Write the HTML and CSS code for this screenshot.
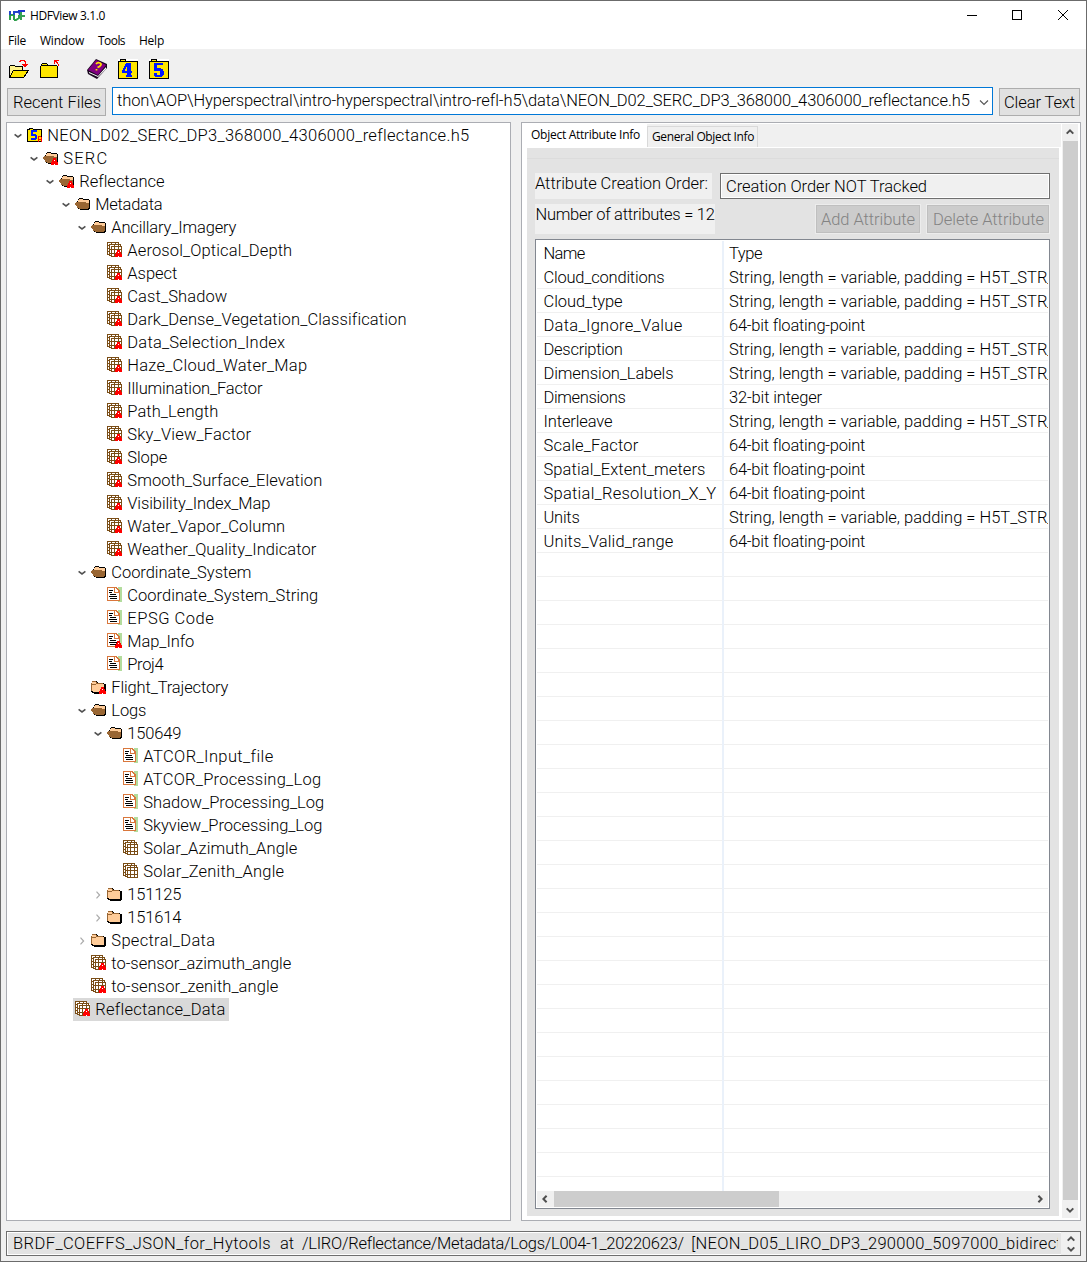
FILE: index.html
```html
<!DOCTYPE html>
<html lang="en">
<head>
<meta charset="utf-8">
<title>HDFView 3.1.0</title>
<link rel="stylesheet" href="styles.css">
</head>
<body>
<svg class="defs" width="0" height="0" aria-hidden="true">
  <symbol id="i-attr" viewBox="0 0 16 16"><path d="M11 8h3v2h1v2h1v3h-3v-1h-1v1H9v-3h1v-2h1z" fill="#f00"/><path d="M12 10h1v1h-1zM12 14h1v1h-1z" fill="#fff"/></symbol>
  <symbol id="i-open" viewBox="0 0 16 16">
    <path d="M3 3h1V2h4v1h6v1h1v9h-1v1H5v-1H3V9H2V5h1z" fill="#000"/>
    <path d="M3 4h1V3h4v1h6v8H3z" fill="#fc9"/>
    <path d="M0 7h1V6h10v1h3v5h-1v1H4v-1H2v-2H1V9H0z" fill="#963"/>
  </symbol>
  <symbol id="i-closed" viewBox="1 0 16 16">
    <path d="M2 2h5v1h1v1h6v1h2v9h-1v1H4v-1H2v-1H1V4h1z" fill="#000"/>
    <path d="M2 3h5v1h1v1h6v8H3v-1H2z" fill="#fc9"/>
    <path d="M2 2h4v1H2zM2 5h4v1H2zM6 3h1v2H6zM1 4h1v8H1zM7 4h6v1H7z" fill="#963"/>
  </symbol>
  <symbol id="i-grid" viewBox="0 0 16 16">
    <path d="M1 1h11v12H1zM4 3h11v12H4z" fill="#fff"/>
    <path d="M0 0h12v1H0zM0 0h1v13H0zM0 3h3v1H0zM0 6h3v1H0zM0 9h3v1H0zM0 12h3v1H0zM4 0h1v3H4zM8 0h1v3H8zM11 0h1v3h-1zM2 2h12v1H2zM2 2h1v12H2zM2 13h3v1H2zM13 2h1v3h-1zM4 4h11v1H4zM4 4h1v11H4zM4 14h11v1H4zM14 4h1v11h-1zM7 3h1v12H7zM11 3h1v12h-1zM3 7h12v1H3zM3 11h12v1H3z" fill="#7a4d16"/>
  </symbol>
  <symbol id="i-doc" viewBox="0 0 16 16">
    <path d="M11 0h4v15h-4z" fill="#b3dc9d"/>
    <path d="M0 0h10v1h1v1h1v1h1v11H0z" fill="#d9773c"/>
    <path d="M1 1h6v5h5v7H1zM8 1h1v1h1v1h1v2H8z" fill="#fff"/>
    <path d="M2 3h4v1H2zM2 5h3v1H2zM3 7h6v1H3zM2 9h8v1H2zM3 11h7v1H3z" fill="#000"/>
  </symbol>
  <symbol id="i-root" viewBox="0 0 16 16">
    <path d="M0 2h2V1h4v1h9v13H0z" fill="#000"/><path d="M1 3h13v11H1zM3 2h3v1H3z" fill="#ffe600"/>
    <path d="M4 3h6v2H6v2h3v1h1v4H9v1H4v-2h4V9H4z" fill="#0020ff"/>
    <path d="M11 9h3v1h1v5h-1v-2h-2v2h-1zM12 10v2h2v-2z" fill="#f00"/>
  </symbol>
  <symbol id="i-down" viewBox="0 0 8 6"><path d="M.6 1.400L4 3.900l3.400-2.500" fill="none" stroke="#505050" stroke-width="1.600"/></symbol>
  <symbol id="i-right" viewBox="0 0 8 8"><path d="M2.500.7L5.600 4 2.500 7.300" fill="none" stroke="#aaa" stroke-width="1.200"/></symbol>
  <symbol id="i-arrow" viewBox="0 0 10 10"><path d="M1.700 6.600L5 3.400l3.300 3.200" fill="none" stroke="#505050" stroke-width="2"/></symbol>
</svg>

<div class="window">
  <header class="titlebar">
    <svg class="logo" width="17" height="11" viewBox="0 0 17 11" fill="none" stroke-width="2"><path d="M1 1v9M5 1v9M1 5h4" stroke="#2e9e4b"/><path d="M1 1v4M5 1v4M6 2h4l1 3" stroke="#2244c8"/><path d="M10 5v3L7 10H5" stroke="#2e9e4b"/><path d="M9 1h7" stroke="#1b35d0"/><path d="M12 10V2M12 6h4" stroke="#35a155"/></svg>
    <span class="ui name" data-w="75">HDFView 3.1.0</span>
    <svg class="controls" width="102" height="12" viewBox="0 0 102 12" fill="none" stroke="#000"><path d="M0 6.500h10"/><path d="M45.500 1.500h9v9h-9z" shape-rendering="crispEdges"/><path d="M91 1l10 10M101 1L91 11"/></svg>
  </header>
  <nav class="menu ui"><span data-w="18">File</span><span data-w="44">Window</span><span data-w="27">Tools</span><span data-w="25">Help</span></nav>

  <div class="tools">
    <svg width="22" height="20" viewBox="0 0 22 20" shape-rendering="crispEdges"><path d="M1.500 18V7.500l1-1h4l1 1h7v3" fill="#fff28a" stroke="#000"/><path d="M1.500 18.500l4-7h15l-5 7z" fill="#ffe600" stroke="#000"/><path d="M11 2.500h1v-1h4v1h1v4M14 5.500h6M15 6.500h4M16 7.500h2" fill="none" stroke="#f00"/></svg>
    <svg width="20" height="20" viewBox="0 0 20 20" shape-rendering="crispEdges"><path d="M0 7h1V5h1V4h5v1h1v1h9v1h1v12H0z" fill="#000"/><path d="M1 7h16v11H1zM2 5h5v1H2z" fill="#ffe600"/><path d="M14 1h5v1h-5zM14 1h1v4h-1zM15 2h2v1h-2zM16 3h2v1h-2zM17 4h1v1h-1zM18 5h1v2h-1z" fill="#f00"/></svg>
    <svg class="book" width="20" height="20" viewBox="0 0 20 20"><path d="M0 11L9 0l11 5v4L10 20 1 15z" fill="#1b0820"/><path d="M1 11l8-10 10 5-8 10z" fill="#800080"/><path d="M2 13l9 4 8-9v2l-8 8-9-4z" fill="#fff"/><path d="M9 5q1.500-2 4-1t-.5 3.500l-2 1M9.500 10v1.500" fill="none" stroke="#ffe600" stroke-width="1.700"/></svg>
    <svg width="20" height="20" viewBox="0 0 20 20" shape-rendering="crispEdges"><path d="M0 0h20v20H0z" fill="#fff"/><path d="M0 20V2h2V0h6v2h12v18z" fill="#000"/><path d="M1 19V3h18v16zM3 1h4v1H3z" fill="#ffe600"/><path d="M8 4h5v8h1v2h-1v2h1v2H8v-2h1v-2H4v-3h1V9h1V7h1V5h1zM9 8H8v2H7v2h2z" fill="#0018ff"/></svg>
    <svg width="20" height="20" viewBox="0 0 20 20" shape-rendering="crispEdges"><path d="M0 0h20v20H0z" fill="#fff"/><path d="M0 20V2h2V0h6v2h12v18z" fill="#000"/><path d="M1 19V3h18v16zM3 1h4v1H3z" fill="#ffe600"/><path d="M5 4h9v2H8v3h4v1h2v2h1v4h-1v1h-1v1H6v-1H5v-3h3v2h3v-4H5z" fill="#0018ff"/></svg>
  </div>

  <div class="filebar">
    <div class="button recent"><span data-w="88">Recent Files</span></div>
    <div class="combo"><span data-w="852.5">thon\AOP\Hyperspectral\intro-hyperspectral\intro-refl-h5\data\NEON_D02_SERC_DP3_368000_4306000_reflectance.h5</span><svg width="10" height="7" viewBox="0 0 10 7"><path d="M1 1.500l4 4 4-4" fill="none" stroke="#555" stroke-width="1.100"/></svg></div>
    <div class="button clear"><span data-w="71">Clear Text</span></div>
  </div>

  <main class="panes">
    <section class="tree" id="tree"></section>
    <section class="detail">
      <div class="tabview">
        <div class="tabs ui"><div class="tab on"><span data-w="109">Object Attribute Info</span></div><div class="tab"><span data-w="102">General Object Info</span></div></div>
        <div class="page">
          <div class="line"></div>
          <div class="order"><div class="label l1"><span data-w="173">Attribute Creation Order:</span></div><div class="field"><span data-w="201">Creation Order NOT Tracked</span></div></div>
          <div class="count"><div class="label l2"><span data-w="179">Number of attributes = 12</span></div><div class="button off add"><span data-w="94">Add Attribute</span></div><div class="button off del"><span data-w="111">Delete Attribute</span></div></div>
          <div class="table">
            <div class="rows" id="rows"></div>
            <div class="hscroll"><svg class="left" width="10" height="10"><use href="#i-arrow"/></svg><div class="thumb"></div><svg class="right" width="10" height="10"><use href="#i-arrow"/></svg></div>
          </div>
        </div>
      </div>
      <div class="vscroll"><svg width="10" height="10"><use href="#i-arrow"/></svg><div class="thumb"></div><svg class="flip" width="10" height="10"><use href="#i-arrow"/></svg></div>
    </section>
  </main>

  <footer class="status"><div class="message"><span data-w="267">BRDF_COEFFS_JSON_for_Hytools  </span><span data-w="22">at  </span><span data-w="389">/LIRO/Reflectance/Metadata/Logs/L004-1_20220623/  </span><span data-w="371">[NEON_D05_LIRO_DP3_290000_5097000_bidirect</span></div><div class="spin"><svg width="10" height="10"><use href="#i-arrow"/></svg><svg class="flip" width="10" height="10"><use href="#i-arrow"/></svg></div></footer>
</div>
<script src="app.js"></script>
</body>
</html>
```
FILE: styles.css
```css
* { box-sizing: border-box; }
body { margin: 0; background: #fff; color: #000; font: 300 16.500px/22px Roboto, "Liberation Sans", sans-serif; }
svg { display: block; flex: none; }
span { white-space: pre; }
.defs { position: absolute; }
.ui { font: 400 12px/18px "Open Sans", "Noto Sans", sans-serif; }
.window { width: 1087px; height: 1262px; border: 1px solid #6b6b6b; background: #f0f0f0; display: flex; flex-direction: column; overflow: hidden; }
.titlebar { height: 28px; flex: none; background: #fff; display: flex; align-items: center; padding: 0 17px 0 8px; }
.titlebar .name { padding-top: 2px; }
.logo { margin-right: 4px; }
.controls { margin-left: auto; }
.menu { height: 20px; flex: none; background: #fff; display: flex; padding: 3px 0 0 7px; }
.menu span { margin-right: 14px; }
.tools { height: 38px; flex: none; display: flex; align-items: center; padding: 2px 0 0 7px; }
.tools svg { margin-right: 11px; }
.tools svg:nth-child(1) { margin-right: 10px; }
.tools .book { margin-left: 16px; }
.filebar { height: 29px; flex: none; display: flex; padding-left: 6px; }
.button { border: 1px solid #adadad; background: #e1e1e1; display: flex; align-items: center; padding: 2px 0 0 5px; }
.recent { width: 99px; height: 28px; margin-top: 1px; }
.combo { width: 881px; height: 28px; margin-left: 6px; border: 1px solid #0078d7; background: #fff; display: flex; align-items: center; justify-content: space-between; padding: 0 3px 0 4px; }
.combo svg { margin-top: 2px; }
.clear { width: 81px; height: 28px; margin: 1px 0 0 6px; padding-left: 4px; }
.panes { height: 1099px; flex: none; margin: 6px 5px 0; display: flex; justify-content: space-between; }
.tree { width: 505px; border: 1px solid #abadb3; background: #fff; padding-top: 1px; }
.node { height: 23px; width: max-content; display: flex; align-items: center; line-height: 24px; }
.node .chev { width: 8px; margin-right: 5px; }
.node .icon { position: relative; width: 16px; height: 16px; margin: 3px 4.300px 0 0; }
.node .icon svg + svg { position: absolute; left: -1px; top: 0; }
.node .body { display: flex; align-items: flex-start; height: 23px; padding-right: 3.700px; }
.node .sel { background: #d9d9d9; margin-left: -2px; padding-left: 2px; }
.detail { width: 560px; border: 1px solid #abadb3; background: #fff; padding: 1px 2px 2px 1px; display: flex; }
.tabview { width: 538px; background: #f0f0f0; display: flex; flex-direction: column; }
.tabs { height: 23px; display: flex; align-items: flex-start; }
.tab { height: 21px; margin-top: 2px; border: 1px solid #d9d9d9; border-bottom: 0; padding: 1px 0 0 4px; width: 111px; }
.tab.on { width: 124px; height: 23px; margin-top: 0; background: #fff; padding: 1px 0 0 7px; border: solid #fff; border-width: 1px 1px 0; }
.page { flex: 1; border: solid #fff; border-width: 1px 2px 2px 4px; background: #e3e3e3; padding: 0 8px; }
.page .line { height: 11px; margin: 0 -8px; border-bottom: 1px solid #dcdcdc; }
.order { display: flex; margin-top: 14px; }
.label { background: #f0f0f0; height: 26px; line-height: 22px; }
.l1 { width: 177px; }
.field { width: 330px; height: 26px; margin-left: 8px; border: 1px solid #6f6f6f; background: #f0f0f0; box-shadow: inset 0 0 0 1px #fff; padding: 2px 0 0 5px; }
.count { display: flex; margin: 5px 0; }
.l2 { width: 180px; height: 30px; padding-left: .5px; }
.off { height: 28px; margin-top: 1px; border-color: #bfbfbf; background: #ccc; outline: 1px solid #ececec; outline-offset: 0; color: #838383; }
.add { width: 104px; margin-left: 101px; padding-left: 4px; }
.del { width: 122px; margin-left: 7px; }
.table { width: 515px; height: 970px; border: 1px solid #828790; background: #fff; padding: 1px; display: flex; flex-direction: column; }
.rows { height: 950px; overflow: hidden; }
.row { height: 24px; border-bottom: 1px solid #f0f0f0; display: flex; line-height: 26px; }
.row.head { border-bottom-color: #fff; }
.row div { overflow: hidden; }
.row .name { width: 187px; border-right: 2px solid #eaf1fa; padding-left: 6.500px; height: 24px; flex: none; }
.row .type { padding-left: 5px; width: 324px; }
.hscroll { height: 16px; background: #f0f0f0; display: flex; align-items: center; padding: 0 3px; }
.hscroll .thumb { width: 225px; height: 16px; background: #cdcdcd; margin-left: 4px; }
.left { transform: rotate(-90deg); }
.right { transform: rotate(90deg); margin-left: auto; }
.flip { transform: rotate(180deg); }
.vscroll { width: 16px; margin-left: 1px; background: #f0f0f0; display: flex; flex-direction: column; align-items: center; padding: 3px 0; }
.vscroll .thumb { width: 15px; height: 1059px; margin: 4px 0 5px; background: #cdcdcd; flex: none; }
.status { width: 1075px; height: 25px; flex: none; margin: 10px 0 0 5px; border: 1px solid #6f6f6f; background: #e3e3e3; box-shadow: inset 0 0 0 1px #fff; display: flex; justify-content: space-between; }
.message { width: 1051px; padding-left: 6px; overflow: hidden; line-height: 23px; white-space: nowrap; }
.spin { width: 19px; background: #f0f0f0; display: flex; flex-direction: column; align-items: center; justify-content: space-between; padding: 2px 0; }
```
FILE: app.js
```js
// depth, chevron (d = open, r = closed, - = none), icon, has attributes, label, label width
const nodes = [
  [0,'d','root',0,'NEON_D02_SERC_DP3_368000_4306000_reflectance.h5',422],
  [1,'d','open',1,'SERC',45],[2,'d','open',1,'Reflectance',85],[3,'d','open',0,'Metadata',67],
  [4,'d','open',0,'Ancillary_Imagery',125],
  [5,'-','grid',1,'Aerosol_Optical_Depth',165],[5,'-','grid',1,'Aspect',50],[5,'-','grid',1,'Cast_Shadow',100],
  [5,'-','grid',1,'Dark_Dense_Vegetation_Classification',279],[5,'-','grid',1,'Data_Selection_Index',158],
  [5,'-','grid',1,'Haze_Cloud_Water_Map',180],[5,'-','grid',1,'Illumination_Factor',135],[5,'-','grid',1,'Path_Length',91],
  [5,'-','grid',1,'Sky_View_Factor',124],[5,'-','grid',1,'Slope',40],[5,'-','grid',1,'Smooth_Surface_Elevation',195],
  [5,'-','grid',1,'Visibility_Index_Map',143],[5,'-','grid',1,'Water_Vapor_Column',158],[5,'-','grid',1,'Weather_Quality_Indicator',189],
  [4,'d','open',0,'Coordinate_System',140],
  [5,'-','doc',0,'Coordinate_System_String',191],[5,'-','doc',0,'EPSG Code',87],[5,'-','doc',1,'Map_Info',67],[5,'-','doc',0,'Proj4',36],
  [4,'-','closed',1,'Flight_Trajectory',117],[4,'d','open',0,'Logs',35],[5,'d','open',0,'150649',54],
  [6,'-','doc',0,'ATCOR_Input_file',130],[6,'-','doc',0,'ATCOR_Processing_Log',178],[6,'-','doc',0,'Shadow_Processing_Log',181],
  [6,'-','doc',0,'Skyview_Processing_Log',179],[6,'-','grid',0,'Solar_Azimuth_Angle',154],[6,'-','grid',0,'Solar_Zenith_Angle',141],
  [5,'r','closed',0,'151125',54],[5,'r','closed',0,'151614',54],[4,'r','closed',0,'Spectral_Data',104],
  [4,'-','grid',1,'to-sensor_azimuth_angle',180],[4,'-','grid',1,'to-sensor_zenith_angle',167],[3,'-','grid',1,'Reflectance_Data',130]
];
const icon = (id, w = 16, h = 16) => `<svg width="${w}" height="${h}" ${w === 16 ? 'shape-rendering="crispEdges"' : ''}><use href="#i-${id}"/></svg>`;
document.getElementById('tree').innerHTML = nodes.map(([d, c, i, a, t, w], n) =>
  `<div class="node" style="padding-left:${7 + 16 * d}px"><div class="chev">${c === 'd' ? icon('down', 8, 6) : c === 'r' ? icon('right', 8, 8) : ''}</div>` +
  `<div class="body${n === nodes.length - 1 ? ' sel' : ''}"><div class="icon">${icon(i)}${a ? icon('attr') : ''}</div><span data-w="${w}">${t}</span></div></div>`).join('');

const S = ['String, length = variable, padding = H5T_STR_', 325.5], F = ['64-bit floating-point', 136], I = ['32-bit integer', 93];
const attrs = [['Name',41,['Type',33]],['Cloud_conditions',121,S],['Cloud_type',79,S],['Data_Ignore_Value',139,F],['Description',79,S],
  ['Dimension_Labels',130,S],['Dimensions',82,I],['Interleave',69,S],['Scale_Factor',95,F],['Spatial_Extent_meters',162,F],
  ['Spatial_Resolution_X_Y',173,F],['Units',36,S],['Units_Valid_range',130,F]];
while (attrs.length < 40) attrs.push(null);
document.getElementById('rows').innerHTML = attrs.map((r, n) => `<div class="row${n ? '' : ' head'}">` + (r
  ? `<div class="name"><span data-w="${r[1]}">${r[0]}</span></div><div class="type"><span data-w="${r[2][1]}">${r[2][0]}</span></div>`
  : '<div class="name"></div><div class="type"></div>') + '</div>').join('');

document.querySelectorAll('[data-w]').forEach(el => {
  const gap = el.dataset.w - el.getBoundingClientRect().width;
  el.style.letterSpacing = gap / el.textContent.length + 'px';
});
```
